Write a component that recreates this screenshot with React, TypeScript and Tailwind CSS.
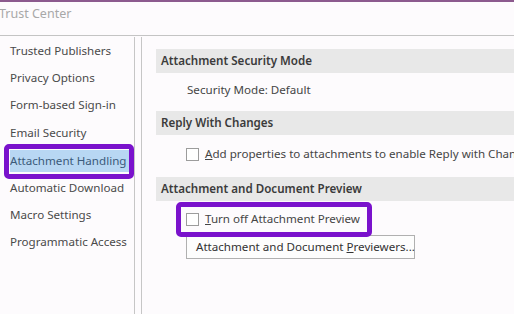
import React from "react";

const navItems = [
  "Trusted Publishers",
  "Privacy Options",
  "Form-based Sign-in",
  "Email Security",
  "Attachment Handling",
  "Automatic Download",
  "Macro Settings",
  "Programmatic Access",
];

const CheckBox = () => (
  <span className="inline-block w-[13px] h-[13px] border border-[#9c9c9c] bg-white shrink-0" />
);

const SectionHeader = ({ title }: { title: string }) => (
  <div className="h-[24px] ml-[14px] pl-[5px] flex items-center bg-[#e8e8e8] font-semibold text-[#3b3b3b] whitespace-nowrap">
    {title}
  </div>
);

const App = () => {
  return (
    <div
      className="w-[514px] h-[314px] overflow-hidden bg-[#fdfbfd] border-t-2 border-[#8c5a8e] text-[11.6px] leading-[16px]"
      style={{ fontFamily: '"Noto Sans", "Open Sans", sans-serif' }}
    >
      {/* ==title== */}
      <div className="h-[34px] border-b border-[#c4c4c4] pt-[4px] -ml-[1px] text-[12.5px] text-[#a8a8a8]">
        Trust Center
      </div>

      <div className="flex h-[280px] pt-[1px]">
        {/* ==left nav== */}
        <div className="w-[135px] shrink-0 border-r border-[#c6c6c6] text-[#4a4a4a]">
          {navItems.map((item) => {
            const active = item === "Attachment Handling";
            return (
              <div key={item} className="relative h-[27.4px] flex items-center pl-[10px] whitespace-nowrap">
                {active ? (
                  <>
                    <span className="absolute left-[4px] right-[0px] top-[-3px] bottom-[-5px] border-[5px] border-[#7a12cc] rounded-[5px]" />
                    <span className="bg-[#b8d7f3] text-[#3b5a7a] pr-[5px] leading-[22px] mt-[2px]">{item}</span>
                  </>
                ) : (
                  item
                )}
              </div>
            );
          })}
        </div>

        {/* ==right panel== */}
        <div className="flex-1 ml-[6px] border-l border-[#c6c6c6] pt-[12px] text-[#454545]">
          <SectionHeader title="Attachment Security Mode" />
          <div className="h-[38px] pt-[9px] pl-[45px]">Security Mode: Default</div>

          <SectionHeader title="Reply With Changes" />
          <div className="h-[42px] pt-[11px] pl-[44px] flex items-start gap-[6px] whitespace-nowrap">
            <span className="mt-[2px]">
              <CheckBox />
            </span>
            <span>
              <span className="underline">A</span>dd properties to attachments to enable Reply with Changes
            </span>
          </div>

          <SectionHeader title="Attachment and Document Preview" />
          <div className="relative h-[34px] pt-[10px] pl-[44px] flex items-start gap-[6px] whitespace-nowrap">
            <span className="absolute left-[34px] w-[196px] top-[1px] h-[35px] border-[5px] border-[#7a12cc] rounded-[5px] z-10" />
            <span className="mt-[2px]">
              <CheckBox />
            </span>
            <span>
              <span className="underline">T</span>urn off Attachment Preview
            </span>
          </div>
          <div className="pl-[44px]">
            <button className="h-[24px] w-[229px] border border-[#b0b0b0] bg-[#fdfdfd] text-left pl-[9px] text-[#333] whitespace-nowrap">
              Attachment and Document <span className="underline">P</span>reviewers...
            </button>
          </div>
        </div>
      </div>
    </div>
  );
};

export default App;
